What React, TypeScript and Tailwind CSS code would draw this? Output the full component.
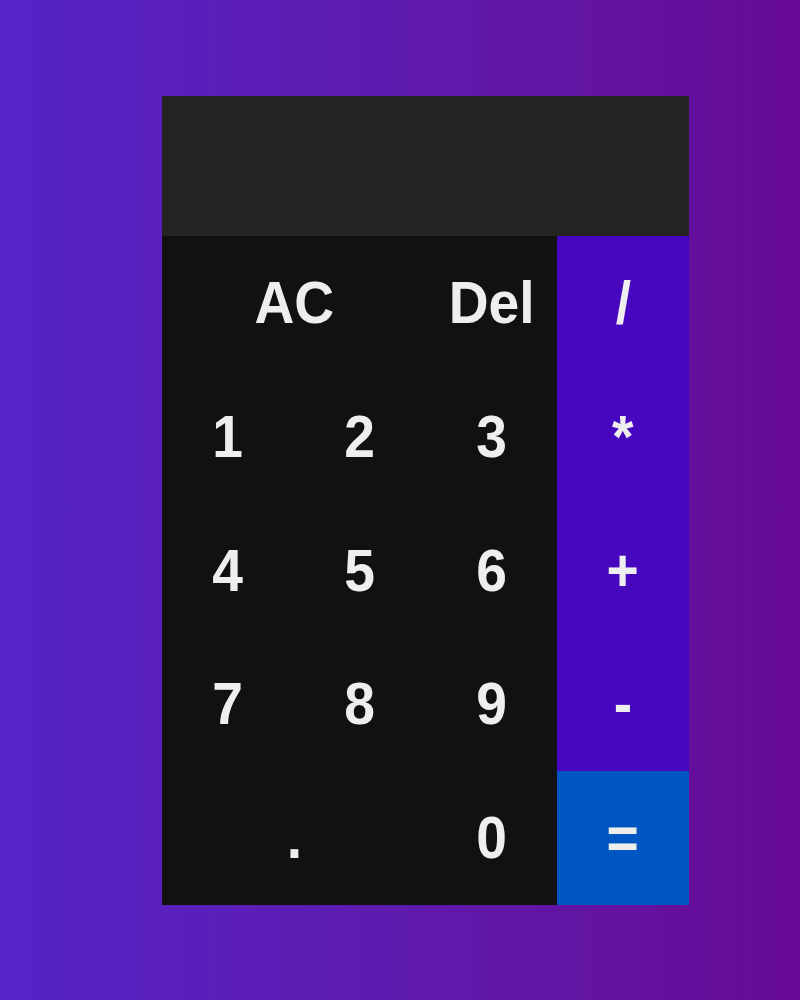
import React from "react";

const Key = ({ label, cls = "" }: { label: string; cls?: string }) => (
  <button className={`flex items-center justify-center text-[60px] font-bold text-[#eeeeee] leading-none ${cls}`}>
    <span className="inline-block scale-x-[0.92]">{label}</span>
  </button>
);

export default function App() {
  return (
    <div
      className="w-[800px] h-[1000px] bg-gradient-to-r from-[#5523c7] to-[#660995] pt-[96px] pl-[162px]"
      style={{ fontFamily: '"Liberation Sans", Arial, sans-serif' }}
    >
      <div className="w-[527px]">
        <div className="h-[140px] bg-[#242424]" />
        <div className="grid grid-cols-[132px_132px_131px_132px] grid-rows-[134px_134px_133px_134px_134px] bg-[#111111]">
          <Key label="AC" cls="col-span-2" />
          <Key label="Del" />
          <Key label="/" cls="bg-[#4607be]" />
          <Key label="1" />
          <Key label="2" />
          <Key label="3" />
          <Key label="*" cls="bg-[#4607be]" />
          <Key label="4" />
          <Key label="5" />
          <Key label="6" />
          <Key label="+" cls="bg-[#4607be]" />
          <Key label="7" />
          <Key label="8" />
          <Key label="9" />
          <Key label="-" cls="bg-[#4607be]" />
          <Key label="." cls="col-span-2" />
          <Key label="0" />
          <Key label="=" cls="bg-[#0056c0]" />
        </div>
      </div>
    </div>
  );
}
